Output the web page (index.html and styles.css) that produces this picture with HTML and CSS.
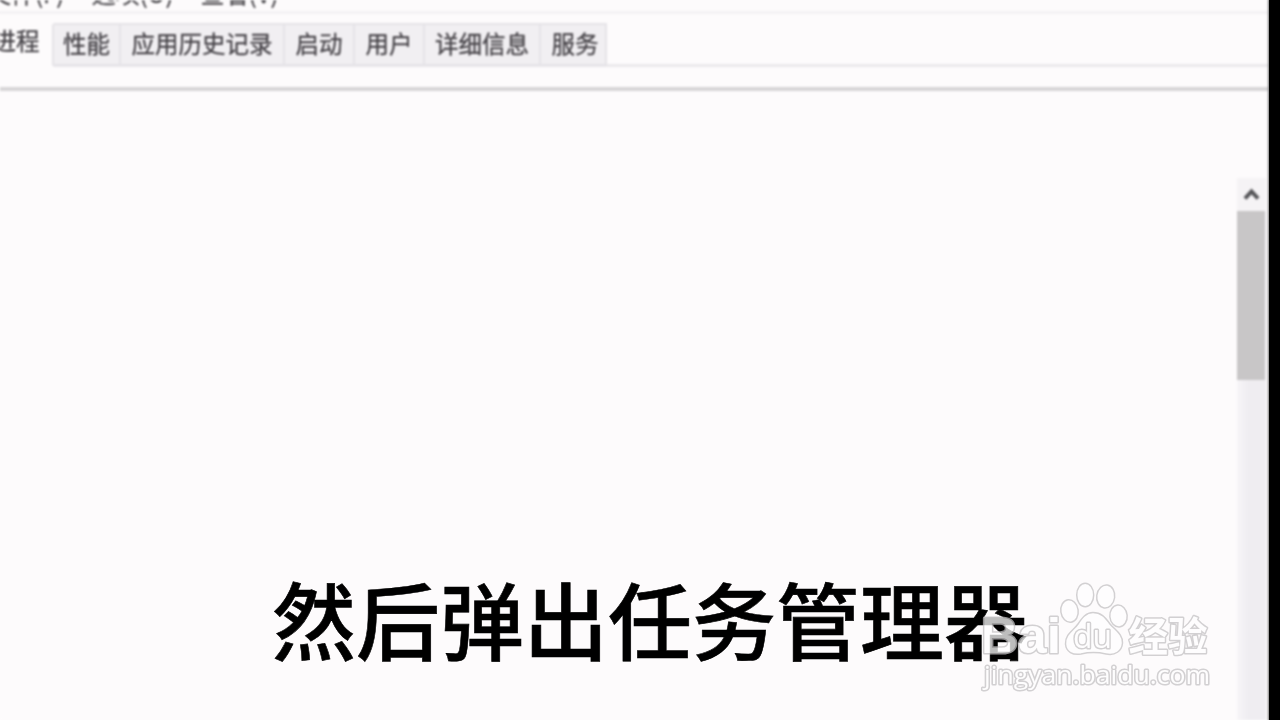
FILE: index.html
```html
<!DOCTYPE html>
<html lang="zh-CN">
<head>
<meta charset="utf-8">
<title>任务管理器</title>
<link rel="stylesheet" href="styles.css">
</head>
<body>
<div class="frame">
  <main class="window">
    <nav class="menu"><span>文件(F)</span><span>选项(O)</span><span>查看(V)</span></nav>
    <div class="tabs">
      <div class="tab active">进程</div>
      <div class="tab t-perf">性能</div>
      <div class="tab t-history">应用历史记录</div>
      <div class="tab t-start">启动</div>
      <div class="tab t-user">用户</div>
      <div class="tab t-detail">详细信息</div>
      <div class="tab t-service">服务</div>
    </div>
    <div class="strip"></div>
    <section class="content">
      <div class="scrollbar">
        <div class="arrow"><svg width="18" height="14" viewBox="0 0 18 14"><path d="M2 11.5 L8.500 4.500 L15 11.5" fill="none" stroke="#555558" stroke-width="4"/></svg></div>
        <div class="thumb"></div>
      </div>
    </section>
  </main>
  <div class="edge"></div>
</div>
<div class="caption">然后弹出任务管理器</div>
<svg class="watermark" width="260" height="130" viewBox="0 0 260 130">
  <g class="mark">
    <text class="brand" x="21" y="82.500" textLength="80" lengthAdjust="spacingAndGlyphs">Bai</text>
    <ellipse cx="109.500" cy="41" rx="8.700" ry="11.300" transform="rotate(-8 109.500 41)"/>
    <ellipse cx="125.200" cy="25" rx="8.500" ry="11.800"/>
    <ellipse cx="145.700" cy="26.500" rx="9" ry="11.500" transform="rotate(8 145.700 26.500)"/>
    <ellipse cx="158.500" cy="46" rx="8.700" ry="11" transform="rotate(-5 158.500 46)"/>
    <path d="M133 42.500C126 42.500 122 48 118 54C114 60 105 64 105.500 74C106 82 113 85.500 121 84C130 82 137 82 146 84C155 86 162 81 162.500 73C163 64 155 60 150 54C145 47 141 42.500 133 42.500Z"/>
    <text class="du" x="113" y="78" textLength="39" lengthAdjust="spacingAndGlyphs">du</text>
    <text class="exp" x="168.500" y="80.500" textLength="79" lengthAdjust="spacingAndGlyphs">经验</text>
    <text class="url" x="24" y="114" textLength="226" lengthAdjust="spacingAndGlyphs">jingyan.baidu.com</text>
  </g>
</svg>
</body>
</html>
```
FILE: styles.css
```css
* { box-sizing: border-box; }
body {
  margin: 0;
  width: 1280px;
  height: 720px;
  overflow: hidden;
  position: relative;
  background: #fdfbfc;
  font-family: "Noto Sans CJK SC", sans-serif;
}
.frame { display: flex; width: 1280px; height: 720px; }
.window {
  width: 1269px;
  height: 720px;
  display: flex;
  flex-direction: column;
  filter: blur(0.9px);
  background: #fdfbfc;
}
.edge { flex: 1; background: #000; box-shadow: 0 0 2px 1px #777; z-index: 1; }
.menu {
  height: 14px;
  border-bottom: 3px solid #f4f2f4;
  display: flex;
  gap: 27px;
  margin-left: -13px;
  align-items: flex-end;
  font-size: 24px;
  line-height: 30px;
  color: #4c4a4e;
  overflow: hidden;
  -webkit-text-stroke: 0.3px #4c4a4e;
}
.menu span { white-space: nowrap; transform: translateY(-3px); }
.tabs {
  display: flex;
  height: 53px;
  padding-top: 9px;
  border-bottom: 3px solid #ebe9ec;
  font-size: 23.5px;
  color: #454247;
  -webkit-text-stroke: 0.3px #454247;
}
.tab {
  height: 43px;
  line-height: 37px;
  text-align: center;
  white-space: nowrap;
  background: #f1eff2;
  border: solid #e5e3e7;
  border-width: 2px 2px 2px 0;
}
.tab.active {
  width: 54px;
  height: 44px;
  line-height: 31px;
  text-indent: -20px;
  background: #fdfbfc;
  border-color: #fdfbfc #e5e3e7 #fdfbfc #fdfbfc;
}
.t-perf { width: 67px; }
.t-history { width: 164px; }
.t-start { width: 70px; }
.t-user { width: 70px; }
.t-detail { width: 116px; }
.t-service { width: 66px; text-indent: 4px; }
.strip { height: 24px; border-bottom: 4px solid #d7d5d7; }
.content { flex: 1; display: flex; justify-content: flex-end; padding: 87px 3px 0 0; }
.scrollbar { width: 29px; background: linear-gradient(90deg, #f7f5f8, #efedf1 40%); }
.arrow { height: 33px; display: flex; justify-content: center; padding-top: 9px; background: #f5f3f5; }
.thumb { height: 169px; background: #c8c6c7; margin: 0 1px 0 0; }
.caption {
  position: absolute;
  left: 272px;
  top: 557px;
  font-size: 84px;
  line-height: 122px;
  font-weight: 500;
  color: #000;
  -webkit-text-stroke: 0.6px #000;
  white-space: nowrap;
}
.watermark { position: absolute; left: 960px; top: 570px; }
.mark { opacity: 0.74; fill: #fff; stroke: #c4c2c4; stroke-width: 1.5; }
.mark text { paint-order: stroke; stroke-width: 3; stroke-linejoin: round; }
.brand { font: 700 50px "Liberation Sans", sans-serif; }
.du { font: 400 33px "Open Sans", sans-serif; }
.exp { font: 700 40px "Noto Sans CJK SC", sans-serif; }
.url { font: 400 25px "Open Sans", sans-serif; }
```
